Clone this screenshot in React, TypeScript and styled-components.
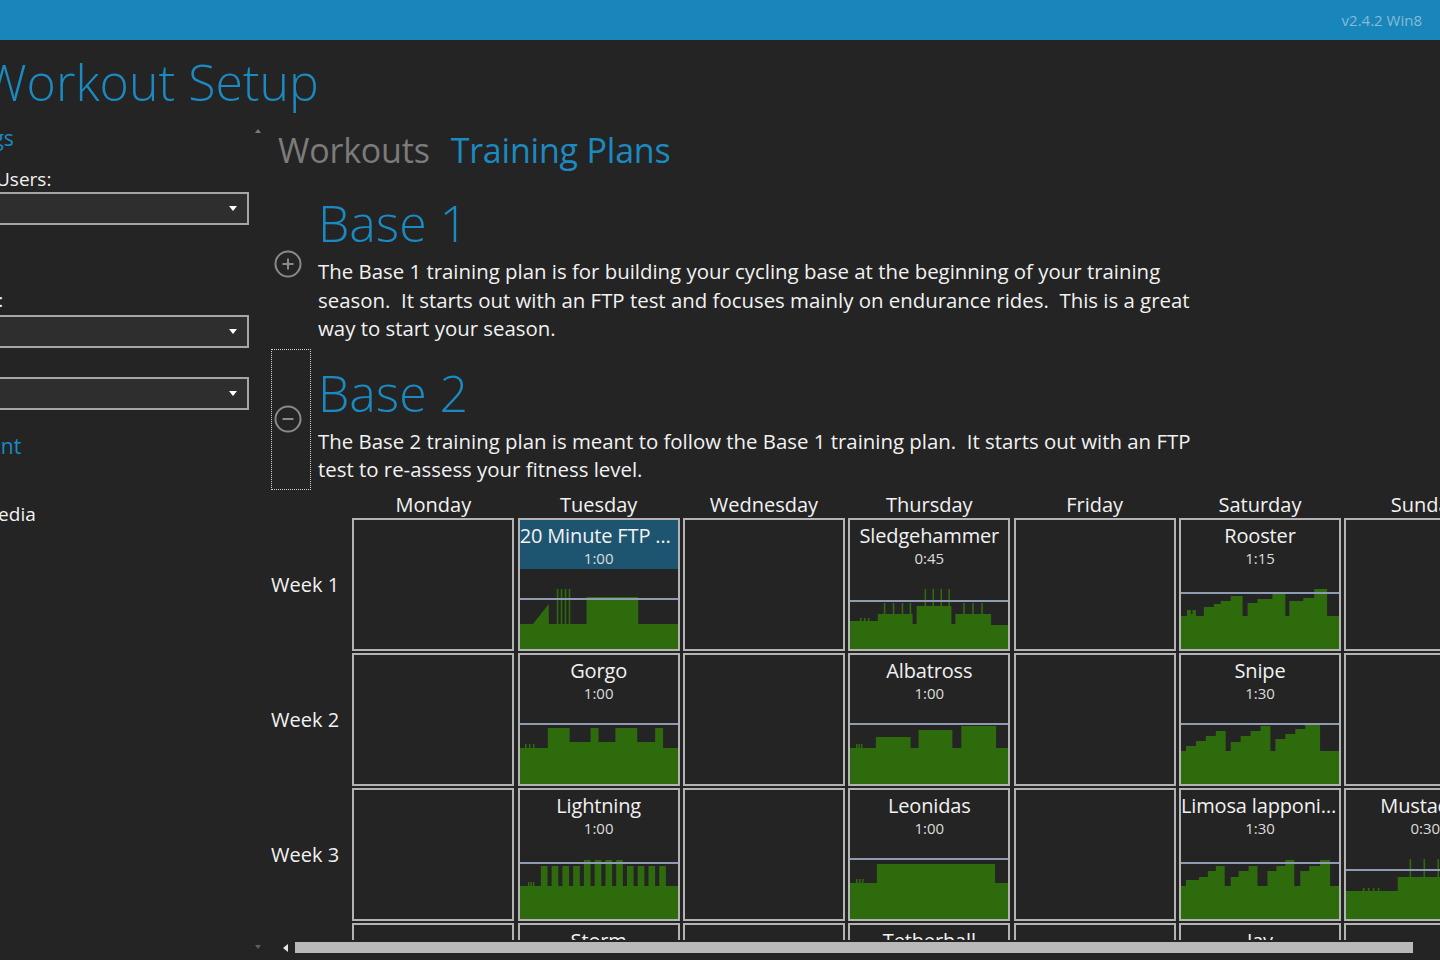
import React from "react";
import styled, { createGlobalStyle } from "styled-components";

type Seg = [number, number, number, number?];

type Workout = {
	name: string;
	time: string;
	segs: Seg[];
	ftp: number;
	selected?: boolean;
};

// a block with thin spikes at given x positions
const blk = (x0: number, x1: number, h: number, sp: number[] = [], sh = 0, w = 1.6): Seg[] => {
	const out: Seg[] = [];
	let x = x0;
	for (const s of sp) {
		out.push([x, s, h]);
		out.push([s, s + w, sh]);
		x = s + w;
	}
	out.push([x, x1, h]);
	return out;
};

const chartPath = (segs: Seg[]) => {
	let d = "M0 80";
	for (const [x0, x1, h0, h1] of segs) {
		const e = h1 ?? h0;
		d += ` L${x0} ${80 - h0} L${x1} ${80 - e}`;
	}
	return d + " L159 80 Z";
};

const lightningBars = (): Seg[] => {
	const out: Seg[] = [[0, 8, 33], [8, 9.5, 37], [9.5, 10.5, 33], [10.5, 12, 37], [12, 13, 33], [13, 14.5, 37]];
	let x = 14.5;
	for (let i = 0; i < 12; i++) {
		const s = 21 + i * 10.83;
		out.push([x, s, 33]);
		out.push([s, s + 6.7, i >= 4 && i <= 7 ? 59 : 53]);
		x = s + 6.7;
	}
	out.push([x, 159, 33]);
	return out;
};

const W: Record<string, Workout> = {
	ftp: {
		name: "20 Minute FTP Test",
		time: "1:00",
		ftp: 50,
		selected: true,
		segs: [[0, 13, 25], [13, 29, 25, 45], ...blk(29, 67, 25, [37, 41, 45, 49], 60), [67, 119, 52], [119, 159, 25]],
	},
	sledge: {
		name: "Sledgehammer",
		time: "0:45",
		ftp: 48,
		segs: [
			...blk(0, 28, 28, [10, 14, 18], 31),
			...blk(28, 63, 35, [34, 43, 52, 60], 46),
			[63, 67, 25],
			...blk(67, 102, 43, [75, 83, 91, 99], 60),
			[102, 106, 25],
			...blk(106, 142, 35, [114, 123, 132], 46),
			[142, 159, 24],
		],
	},
	rooster: {
		name: "Rooster",
		time: "1:15",
		ftp: 56,
		segs: [[0, 6, 33], ...blk(6, 15, 39, [10], 35), [15, 23, 33], [23, 33, 42], [33, 40, 45], [40, 50, 48], [50, 62, 53], [62, 67, 33], [67, 77, 46], [77, 92, 50], [92, 105, 55], [105, 109, 33], [109, 123, 48], [123, 134, 51], [134, 147, 60], [147, 159, 33]],
	},
	gorgo: {
		name: "Gorgo",
		time: "1:00",
		ftp: 60,
		segs: [...blk(0, 28, 36, [5, 9, 13], 40), [28, 50, 56], [50, 71, 42], [71, 79, 56], [79, 96, 42], [96, 118, 56], [118, 136, 42], [136, 144, 56], [144, 159, 36]],
	},
	albatross: {
		name: "Albatross",
		time: "1:00",
		ftp: 60,
		segs: [...blk(0, 26, 36, [6, 8.5, 11], 40), [26, 61, 47], [61, 69, 36], [69, 103, 54], [103, 112, 36], [112, 147, 58], [147, 159, 36]],
	},
	snipe: {
		name: "Snipe",
		time: "1:30",
		ftp: 60,
		segs: [[0, 5, 33], [5, 15, 38], [15, 25, 43], [25, 35, 48], [35, 45, 53], [45, 50, 33], [50, 60, 42], [60, 70, 48], [70, 80, 53], [80, 90, 58], [90, 95, 33], [95, 105, 45], [105, 115, 50], [115, 125, 55], [125, 140, 60], [140, 159, 33]],
	},
	lightning: {
		name: "Lightning",
		time: "1:00",
		ftp: 56,
		segs: lightningBars(),
	},
	leonidas: {
		name: "Leonidas",
		time: "1:00",
		ftp: 60,
		segs: [...blk(0, 27, 36, [6, 9, 12], 40), [27, 146, 55], [146, 159, 36]],
	},
	limosa: {
		name: "Limosa lapponica",
		time: "1:30",
		ftp: 56,
		segs: [[0, 5, 33], [5, 18, 39], [18, 27, 42], [27, 35, 48], [35, 44, 53], [44, 50, 33], [50, 58, 42], [58, 68, 48], [68, 77, 53], [77, 87, 33], [87, 96, 48], [96, 105, 53], [105, 114, 59], [114, 120, 33], [120, 129, 48], [129, 140, 53], [140, 150, 59], [150, 159, 33]],
	},
	mustache: {
		name: "Mustache",
		time: "0:30",
		ftp: 49,
		segs: [...blk(0, 52, 28, [17, 22, 27, 32], 31), ...blk(52, 130, 42, [64, 78, 92], 60), [130, 159, 28]],
	},
	storm: {
		name: "Storm",
		time: "1:00",
		ftp: 56,
		segs: [[0, 30, 33], [30, 60, 50], [60, 80, 33], [80, 110, 50], [110, 159, 33]],
	},
	tether: {
		name: "Tetherball",
		time: "1:00",
		ftp: 56,
		segs: [[0, 30, 33], [30, 130, 52], [130, 159, 33]],
	},
	jay: {
		name: "Jay",
		time: "1:30",
		ftp: 56,
		segs: [[0, 40, 40], [40, 120, 48], [120, 159, 33]],
	},
};

const days = ["Monday", "Tuesday", "Wednesday", "Thursday", "Friday", "Saturday", "Sunday"];

const weeks: (Workout | null)[][] = [
	[null, W.ftp, null, W.sledge, null, W.rooster, null],
	[null, W.gorgo, null, W.albatross, null, W.snipe, null],
	[null, W.lightning, null, W.leonidas, null, W.limosa, W.mustache],
	[null, W.storm, null, W.tether, null, W.jay, null],
];

const plans = [
	{
		title: "Base 1",
		text: "The Base 1 training plan is for building your cycling base at the beginning of your training season.  It starts out with an FTP test and focuses mainly on endurance rides.  This is a great way to start your season.",
		open: false,
	},
	{
		title: "Base 2",
		text: "The Base 2 training plan is meant to follow the Base 1 training plan.  It starts out with an FTP test to re-assess your fitness level.",
		open: true,
	},
];

function PlusMinus({ minus }: { minus: boolean }) {
	return (
		<svg width="28" height="28" viewBox="0 0 28 28">
			<circle cx="14" cy="14" r="12.5" fill="none" stroke="#8a8a8a" strokeWidth="2" />
			<path d={minus ? "M8.5 14h11" : "M8.5 14h11M14 8.5v11"} stroke="#8a8a8a" strokeWidth="2" />
		</svg>
	);
}

function Chart({ w }: { w: Workout }) {
	return (
		<ChartSvg viewBox="0 0 159 80" preserveAspectRatio="none">
			<path d={chartPath(w.segs)} fill="#2e6b0c" />
			<line x1="0" x2="159" y1={80 - w.ftp} y2={80 - w.ftp} stroke="#8d9bb3" strokeWidth="2" />
		</ChartSvg>
	);
}

export default function App() {
	return (
		<>
			<GlobalStyle />
			<TopBar>
				<Version>v2.4.2 Win8</Version>
			</TopBar>
			<PageTitle>Workout Setup</PageTitle>
			<Body>
				<SidePanel>
					<SideHeading $shift={-64}>Settings</SideHeading>
					<SideLabel $shift={-4} $top={14}>Users:</SideLabel>
					<Dropdown>
						<Caret />
					</Dropdown>
					<SideLabel $shift={-48} $top={62}>Units:</SideLabel>
					<Dropdown $top={2}>
						<Caret />
					</Dropdown>
					<Dropdown $top={29}>
						<Caret />
					</Dropdown>
					<SideHeading $shift={-86} $top={22}>Equipment</SideHeading>
					<SideLabel $shift={-19} $top={41}>Media</SideLabel>
				</SidePanel>
				<Rail>
					<ArrowUp />
					<ArrowDown />
				</Rail>
				<Main>
					<Tabs>
						<Tab>Workouts</Tab>
						<Tab $active>Training Plans</Tab>
					</Tabs>
					<PlanList>
						{plans.map((p) => (
							<PlanItem key={p.title}>
								<IconCol $focused={p.open}>
									<PlusMinus minus={p.open} />
								</IconCol>
								<PlanBody>
									<PlanTitle>{p.title}</PlanTitle>
									<PlanText>{p.text}</PlanText>
								</PlanBody>
							</PlanItem>
						))}
					</PlanList>
					<CalendarView>
						<CalGrid>
							<span />
							{days.map((d) => (
								<DayName key={d}>{d}</DayName>
							))}
							{weeks.map((wk, i) => (
								<React.Fragment key={i}>
									<WeekLabel>Week {i + 1}</WeekLabel>
									{wk.map((w, j) => (
										<Cell key={j}>
											{w && (
												<>
													<CellHead $selected={!!w.selected}>
														<CellTitle>{w.name}</CellTitle>
														<CellTime>{w.time}</CellTime>
													</CellHead>
													<Chart w={w} />
												</>
											)}
										</Cell>
									))}
								</React.Fragment>
							))}
						</CalGrid>
					</CalendarView>
					<HScroll>
						<ArrowLeft />
						<Thumb />
					</HScroll>
				</Main>
			</Body>
		</>
	);
}

const GlobalStyle = createGlobalStyle`
	html, body {
		margin: 0;
		background: #242424;
		overflow: hidden;
		font-family: "Open Sans", "Noto Sans", sans-serif;
		color: #f2f2f2;
	}
	#root {
		width: 1440px;
		height: 960px;
		overflow: hidden;
	}
`;

const TopBar = styled.div`
	height: 40px;
	background: #1886ba;
	display: flex;
	justify-content: flex-end;
	align-items: center;
	padding-right: 18px;
`;

const Version = styled.span`
	font-size: 15px;
	color: #86bad6;
`;

const PageTitle = styled.h1`
	margin: 0 0 0 -18px;
	height: 80px;
	padding-top: 6px;
	box-sizing: border-box;
	font-size: 50px;
	line-height: 72px;
	font-weight: 300;
	color: #1b8ac1;
	white-space: nowrap;
`;

const Body = styled.div`
	display: flex;
	height: 840px;
`;

const SidePanel = styled.div`
	width: 249px;
	flex-shrink: 0;
	overflow: hidden;
	display: flex;
	flex-direction: column;
`;

const SideHeading = styled.div<{ $shift: number; $top?: number }>`
	margin-left: ${(p) => p.$shift}px;
	margin-top: ${(p) => p.$top ?? 4}px;
	font-size: 21px;
	line-height: 28px;
	color: #1b8ac1;
	white-space: nowrap;
`;

const SideLabel = styled.div<{ $shift: number; $top: number }>`
	margin-left: ${(p) => p.$shift}px;
	margin-top: ${(p) => p.$top}px;
	font-size: 19px;
	line-height: 26px;
	white-space: nowrap;
`;

const Dropdown = styled.div<{ $top?: number }>`
	margin-top: ${(p) => p.$top ?? 0}px;
	margin-left: -40px;
	height: 33px;
	box-sizing: border-box;
	border: 2px solid #a6a6a6;
	background: #2e2e2e;
	display: flex;
	justify-content: flex-end;
	align-items: center;
	padding-right: 10px;
`;

const Caret = styled.span`
	width: 0;
	height: 0;
	border-left: 4.5px solid transparent;
	border-right: 4.5px solid transparent;
	border-top: 5px solid #ffffff;
`;

const Rail = styled.div`
	width: 22px;
	flex-shrink: 0;
	display: flex;
	flex-direction: column;
	justify-content: space-between;
	align-items: center;
	padding: 9px 5px 11px 0;
	box-sizing: border-box;
`;

const ArrowUp = styled.span`
	width: 0;
	height: 0;
	border-left: 3.5px solid transparent;
	border-right: 3.5px solid transparent;
	border-bottom: 4px solid #7a7a7a;
`;

const ArrowDown = styled(ArrowUp)`
	border-bottom: none;
	border-top: 4px solid #5e5e5e;
`;

const Main = styled.div`
	flex: 1;
	min-width: 0;
	display: flex;
	flex-direction: column;
	overflow: hidden;
`;

const Tabs = styled.div`
	height: 59px;
	flex-shrink: 0;
	display: flex;
	gap: 21px;
	padding-left: 7px;
`;

const Tab = styled.span<{ $active?: boolean }>`
	font-size: 34px;
	line-height: 61px;
	letter-spacing: -0.2px;
	color: ${(p) => (p.$active ? "#1b8ac1" : "#7b7b7b")};
`;

const PlanList = styled.div`
	display: flex;
	flex-direction: column;
	flex-shrink: 0;
`;

const PlanItem = styled.div`
	display: flex;
	align-items: stretch;
`;

const IconCol = styled.div<{ $focused: boolean }>`
	width: 40px;
	flex-shrink: 0;
	box-sizing: border-box;
	border: 1px dotted ${(p) => (p.$focused ? "#d4d4d4" : "transparent")};
	display: flex;
	align-items: center;
	padding-left: 2px;
`;

const PlanBody = styled.div`
	margin-left: 7px;
	width: 890px;
	padding-bottom: 6px;
`;

const PlanTitle = styled.div`
	padding-top: 10px;
	font-size: 50px;
	line-height: 68px;
	font-weight: 300;
	color: #1b8ac1;
`;

const PlanText = styled.div`
	font-size: 20.4px;
	line-height: 28.5px;
	white-space: pre-wrap;
`;

const CalendarView = styled.div`
	flex: 1;
	min-height: 0;
	overflow: hidden;
	margin-top: 4px;
`;

const CalGrid = styled.div`
	display: grid;
	grid-template-columns: 78px repeat(7, 162px);
	grid-template-rows: 22px;
	grid-auto-rows: 133px;
	column-gap: 3.33px;
	row-gap: 2px;
	width: max-content;
`;

const DayName = styled.div`
	font-size: 20px;
	line-height: 22px;
	text-align: center;
	white-space: nowrap;
`;

const WeekLabel = styled.div`
	display: flex;
	align-items: center;
	font-size: 20px;
	white-space: nowrap;
`;

const Cell = styled.div`
	border: 2px solid #b3b3b3;
	display: flex;
	flex-direction: column;
	overflow: hidden;
`;

const CellHead = styled.div<{ $selected: boolean }>`
	height: 49px;
	flex-shrink: 0;
	background: ${(p) => (p.$selected ? "#1d5571" : "transparent")};
	text-align: center;
	padding: 4px 0 0;
	box-sizing: border-box;
`;

const CellTitle = styled.div`
	font-size: 20px;
	line-height: 24px;
	letter-spacing: -0.15px;
	white-space: nowrap;
	overflow: hidden;
	text-overflow: ellipsis;
`;

const CellTime = styled.div`
	margin-top: 0;
	font-size: 15px;
	line-height: 21px;
	color: #dcdcdc;
`;

const ChartSvg = styled.svg`
	display: block;
	width: 100%;
	height: 80px;
`;

const HScroll = styled.div`
	height: 20px;
	flex-shrink: 0;
	display: flex;
	align-items: flex-start;
	padding: 2px 0 0 12px;
	box-sizing: border-box;
`;

const ArrowLeft = styled.span`
	margin-top: 1.5px;
	width: 0;
	height: 0;
	border-top: 4px solid transparent;
	border-bottom: 4px solid transparent;
	border-right: 5px solid #e6e6e6;
`;

const Thumb = styled.div`
	margin-left: 7px;
	width: 1118px;
	height: 11px;
	background: #b9b9b9;
`;
